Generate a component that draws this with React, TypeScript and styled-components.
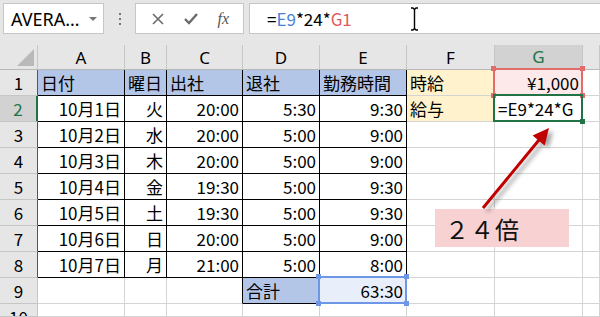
import styled, { createGlobalStyle, css } from 'styled-components'

const GlobalStyle = createGlobalStyle`
  html, body {
    margin: 0;
    padding: 0;
    background: #ffffff;
    overflow: hidden;
  }
  body {
    font-family: 'Noto Sans CJK JP', 'Noto Sans', sans-serif;
  }
`

const GRID = '#d4d4d4'
const GREEN = '#217346'

const Page = styled.div`
  position: relative;
  width: 600px;
  height: 317px;
  overflow: hidden;
`

const Toolbar = styled.div`
  display: flex;
  align-items: flex-start;
  height: 45px;
  padding: 3px 0 0 3px;
  box-sizing: border-box;
  background: #e6e6e6;
`

const NameBox = styled.div`
  display: flex;
  align-items: center;
  justify-content: space-between;
  width: 101px;
  height: 31px;
  box-sizing: border-box;
  padding: 0 6px 0 7px;
  background: #fff;
  border: 1px solid #c6c6c6;
  font-family: 'Noto Sans', 'Liberation Sans', sans-serif;
  font-size: 18px;
  color: #000;
`

const Caret = styled.span`
  width: 0;
  height: 0;
  border-left: 4px solid transparent;
  border-right: 4px solid transparent;
  border-top: 4px solid #767676;
`

const Dots = styled.div`
  display: flex;
  flex-direction: column;
  align-items: center;
  justify-content: center;
  gap: 3px;
  width: 31px;
  height: 31px;
  span {
    width: 2px;
    height: 2px;
    background: #767676;
  }
`

const FxBox = styled.div`
  display: flex;
  align-items: center;
  justify-content: space-around;
  width: 109px;
  height: 31px;
  box-sizing: border-box;
  padding: 0 4px 0 6px;
  margin-right: 5px;
  background: #fff;
  border: 1px solid #c6c6c6;
  color: #6a6a6a;
`

const FxLabel = styled.span`
  font-family: 'Liberation Serif', serif;
  font-style: italic;
  font-size: 16px;
  color: #555;
`

const FormulaInput = styled.div`
  position: relative;
  flex: 1;
  display: flex;
  align-items: center;
  height: 31px;
  box-sizing: border-box;
  padding-left: 17px;
  background: #fff;
  border: 1px solid #c6c6c6;
  border-right: none;
  font-size: 17px;
  color: #000;
  white-space: nowrap;
`

const Ref = styled.span<{ $c: string }>`
  color: ${(p) => p.$c};
`

const IBeam = styled.svg`
  margin-left: 58px;
`

const Sheet = styled.div`
  display: grid;
  grid-template-columns: 38px 87px 42px 76px 77px 87px 88px 88px 1fr;
  grid-template-rows: 25px repeat(9, 26px) 13px;
`

const ColHead = styled.div<{ $active?: boolean }>`
  display: flex;
  align-items: center;
  justify-content: center;
  box-sizing: border-box;
  background: #e6e6e6;
  border-right: 1px solid #c6c6c6;
  border-bottom: 1px solid #b8b8b8;
  font-family: 'Noto Sans', 'Liberation Sans', sans-serif;
  font-size: 17px;
  color: #000;
  ${(p) =>
    p.$active &&
    css`
      background: #d2d2d2;
      color: ${GREEN};
      border-bottom: 2px solid ${GREEN};
    `}
`

const Corner = styled.div`
  position: relative;
  background: #e6e6e6;
  border-right: 1px solid #c6c6c6;
  border-bottom: 1px solid #b8b8b8;
  box-sizing: border-box;
  &::after {
    content: '';
    position: absolute;
    right: 3px;
    bottom: 3px;
    width: 0;
    height: 0;
    border-left: 17px solid transparent;
    border-bottom: 17px solid #b9b9b9;
  }
`

const RowHead = styled.div<{ $active?: boolean; $edge?: boolean; $cut?: boolean }>`
  display: flex;
  align-items: ${(p) => (p.$cut ? 'flex-start' : 'center')};
  justify-content: center;
  box-sizing: border-box;
  background: #e6e6e6;
  border-right: 1px solid ${(p) => (p.$edge ? '#555' : '#c6c6c6')};
  border-bottom: 1px solid #c6c6c6;
  font-size: 17px;
  line-height: 24px;
  color: #000;
  overflow: hidden;
  ${(p) => p.$cut && 'padding-top: 1px;'}
  ${(p) =>
    p.$active &&
    css`
      background: #d2d2d2;
      color: ${GREEN};
      border-right: 2px solid ${GREEN};
    `}
`

const Cell = styled.div<{ $r?: string; $b?: string; $fill?: string; $align?: string }>`
  position: relative;
  display: flex;
  align-items: center;
  justify-content: ${(p) => (p.$align === 'right' ? 'flex-end' : 'flex-start')};
  box-sizing: border-box;
  padding: 0 3px 0 3px;
  background: ${(p) => p.$fill || '#fff'};
  border-right: 1px solid ${(p) => p.$r || GRID};
  border-bottom: 1px solid ${(p) => p.$b || GRID};
  font-size: 17px;
  color: #000;
  white-space: nowrap;
`

const Clip = styled.span`
  overflow: hidden;
  white-space: nowrap;
`

const Range = styled.div<{ $c: string }>`
  position: absolute;
  left: -2px;
  top: -2px;
  right: -1px;
  bottom: -1px;
  border: 2px solid ${(p) => p.$c};
  pointer-events: none;
  z-index: 2;
`

const Handle = styled.span<{ $c: string; $x: 'l' | 'r'; $y: 't' | 'b' }>`
  position: absolute;
  width: 5px;
  height: 5px;
  background: ${(p) => p.$c};
  ${(p) => (p.$x === 'l' ? 'left: -4px;' : 'right: -4px;')}
  ${(p) => (p.$y === 't' ? 'top: -4px;' : 'bottom: -4px;')}
`

const Callout = styled.div`
  position: absolute;
  left: 435px;
  top: 209px;
  width: 134px;
  height: 38px;
  display: flex;
  align-items: center;
  padding-left: 10px;
  box-sizing: border-box;
  background: #f8d1d2;
  font-size: 24px;
  letter-spacing: 1px;
  color: #111;
  z-index: 3;
`

const Arrow = styled.svg`
  position: absolute;
  left: 470px;
  top: 115px;
  overflow: visible;
  filter: drop-shadow(4px 3px 2px rgba(0, 0, 0, 0.35));
  z-index: 4;
`

type Row = { n: number; cells: string[] }

const rows: Row[] = [
  { n: 1, cells: ['日付', '曜日', '出社', '退社', '勤務時間'] },
  { n: 2, cells: ['10月1日', '火', '20:00', '5:30', '9:30'] },
  { n: 3, cells: ['10月2日', '水', '20:00', '5:00', '9:00'] },
  { n: 4, cells: ['10月3日', '木', '20:00', '5:00', '9:00'] },
  { n: 5, cells: ['10月4日', '金', '19:30', '5:00', '9:30'] },
  { n: 6, cells: ['10月5日', '土', '19:30', '5:00', '9:30'] },
  { n: 7, cells: ['10月6日', '日', '20:00', '5:00', '9:00'] },
  { n: 8, cells: ['10月7日', '月', '21:00', '5:00', '8:00'] },
]

const HEAD_FILL = '#b4c6e7'
const NOTE_FILL = '#fff2cc'

function Handles({ c, fill }: { c: string; fill?: boolean }) {
  if (fill) return <Handle $c={c} $x="r" $y="b" />
  return (
    <>
      <Handle $c={c} $x="l" $y="t" />
      <Handle $c={c} $x="r" $y="t" />
      <Handle $c={c} $x="l" $y="b" />
      <Handle $c={c} $x="r" $y="b" />
    </>
  )
}

function sideCells(n: number) {
  if (n === 1) {
    return [
      <Cell key="f" $fill={NOTE_FILL}>時給</Cell>,
      <Cell key="g" $fill="#fde9e9" $align="right">
        ¥1,000
        <Range $c="#e26b6b">
          <Handles c="#e26b6b" />
        </Range>
      </Cell>,
    ]
  }
  if (n === 2) {
    return [
      <Cell key="f" $fill={NOTE_FILL}>給与</Cell>,
      <Cell key="g">
        <Clip>=E9*24*G</Clip>
        <Range $c={GREEN}>
          <Handles c={GREEN} fill />
        </Range>
      </Cell>,
    ]
  }
  return [<Cell key="f" />, <Cell key="g" />]
}

export default function App() {
  return (
    <Page>
      <GlobalStyle />
      <Toolbar>
        <NameBox>
          AVERA…
          <Caret />
        </NameBox>
        <Dots>
          <span />
          <span />
          <span />
        </Dots>
        <FxBox>
          <svg width="12" height="12" viewBox="0 0 12 12">
            <path d="M1 1 L11 11 M11 1 L1 11" stroke="#6a6a6a" strokeWidth="1.6" />
          </svg>
          <svg width="14" height="12" viewBox="0 0 14 12">
            <path d="M1 6 L5 10 L13 1" stroke="#6a6a6a" strokeWidth="2.4" fill="none" />
          </svg>
          <FxLabel>fx</FxLabel>
        </FxBox>
        <FormulaInput>
          =<Ref $c="#4a7fdc">E9</Ref>*24*<Ref $c="#e5595b">G1</Ref>
          <IBeam width="9" height="24" viewBox="0 0 9 24">
            <path d="M1 1 H3 L4.5 2.5 L6 1 H8 M4.5 2.5 V21.5 M1 23 H3 L4.5 21.5 L6 23 H8" stroke="#000" strokeWidth="1.4" fill="none" />
          </IBeam>
        </FormulaInput>
      </Toolbar>

      <Sheet>
        <Corner />
        {['A', 'B', 'C', 'D', 'E', 'F', 'G', ''].map((c) => (
          <ColHead key={c || 'h'} $active={c === 'G'}>
            {c}
          </ColHead>
        ))}

        {rows.map((row) => (
          <>
            <RowHead key={`h${row.n}`} $active={row.n === 2} $edge>
              {row.n}
            </RowHead>
            {row.cells.map((v, i) => (
              <Cell
                key={`${row.n}-${i}`}
                $r="#000"
                $b="#000"
                $fill={row.n === 1 ? HEAD_FILL : undefined}
                $align={row.n === 1 ? 'left' : 'right'}
              >
                {v}
              </Cell>
            ))}
            {sideCells(row.n)}
            <Cell key={`${row.n}-h`} />
          </>
        ))}

        <RowHead>9</RowHead>
        <Cell />
        <Cell />
        <Cell $r="#000" />
        <Cell $r="#000" $b="#000" $fill={HEAD_FILL}>合計</Cell>
        <Cell $r="#000" $b="#000" $fill="#e9effa" $align="right">
          63:30
          <Range $c="#6d96e6">
            <Handles c="#6d96e6" />
          </Range>
        </Cell>
        <Cell />
        <Cell />
        <Cell />

        <RowHead $cut>10</RowHead>
        {Array.from({ length: 8 }).map((_, i) => (
          <Cell key={`r10-${i}`} />
        ))}
      </Sheet>

      <Arrow width="100" height="105" viewBox="0 0 100 105">
        <line x1="13" y1="93" x2="69" y2="25" stroke="#c00000" strokeWidth="3" />
        <polygon points="79,13 74.6,30.4 62.6,20.6" fill="#c00000" />
      </Arrow>
      <Callout>２４倍</Callout>
    </Page>
  )
}
